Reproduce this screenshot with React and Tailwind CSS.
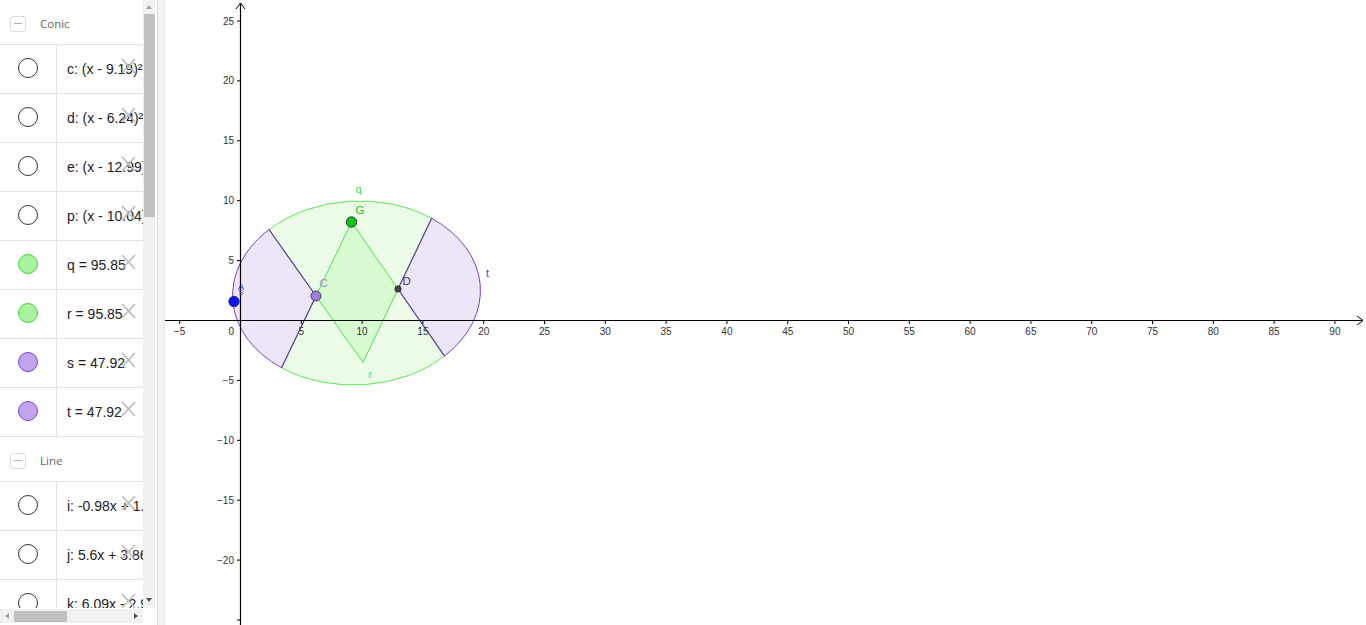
import React from "react";

const conicRows = [
  { text: "c: (x - 9.19)² + (y - 2.37)² = 35.26", dot: "empty" },
  { text: "d: (x - 6.24)² + (y - 8.47)² = 35.26", dot: "empty" },
  { text: "e: (x - 12.99)² + (y - 8.47)² = 35.26", dot: "empty" },
  { text: "p: (x - 10.04)² + (y - 2.37)² = 35.26", dot: "empty" },
  { text: "q = 95.85", dot: "green" },
  { text: "r = 95.85", dot: "green" },
  { text: "s = 47.92", dot: "purple" },
  { text: "t = 47.92", dot: "purple" },
];

const lineRows = [
  { text: "i: -0.98x + 1.23y = 36.81", dot: "empty" },
  { text: "j: 5.6x + 3.86y = 43.47", dot: "empty" },
  { text: "k: 6.09x - 2.97y = 73.51", dot: "empty" },
];

const dotClass = {
  empty: "bg-white border-[#333]",
  green: "bg-[#a8f2a0] border-[#3cd63c]",
  purple: "bg-[#c2a3ef] border-[#7a44d4]",
};

function Header({ title }) {
  return (
    <div className="h-[45px] flex items-center pt-[3px] border-b border-[#e2e2e2]">
      <span className="ml-[10px] w-[16px] h-[16px] rounded-[3px] border border-[#dcdcdc] flex items-center justify-center">
        <span className="w-[8px] h-px bg-[#b0b0b0]" />
      </span>
      <span className="ml-[14px] text-[11.5px] text-[#666]" style={{ fontFamily: "'Open Sans', sans-serif" }}>
        {title}
      </span>
    </div>
  );
}

function Row({ text, dot }) {
  return (
    <div className="relative h-[49px] flex border-b border-[#e2e2e2]">
      <div className="w-[57px] shrink-0 flex items-center justify-center pb-[3px] border-r border-[#e2e2e2]">
        <span className={`w-[20px] h-[20px] rounded-full border ${dotClass[dot]}`} />
      </div>
      <div className="flex items-center pl-[10px] whitespace-nowrap text-[14px] text-[#222]">
        {text}
      </div>
      <svg className="absolute left-[120px] top-[13px]" width="17" height="16" viewBox="0 0 17 16">
        <path d="M2 1 L15 15 M15 1 L2 15" stroke="#bdbdbd" strokeWidth="1.8" fill="none" />
      </svg>
    </div>
  );
}

// ellipse geometry in page pixels
const cx = 356.5, cy = 293, rx = 124, ry = 92, deg = -2.5;
const phi = (deg * Math.PI) / 180;

function hit(p, q) {
  const dx = q[0] - p[0], dy = q[1] - p[1];
  const c = Math.cos(phi), s = Math.sin(phi);
  const wx = q[0] - cx, wy = q[1] - cy;
  const lx = wx * c + wy * s, ly = -wx * s + wy * c;
  const ldx = dx * c + dy * s, ldy = -dx * s + dy * c;
  const A = (ldx * ldx) / (rx * rx) + (ldy * ldy) / (ry * ry);
  const B = 2 * ((lx * ldx) / (rx * rx) + (ly * ldy) / (ry * ry));
  const C = (lx * lx) / (rx * rx) + (ly * ly) / (ry * ry) - 1;
  const t = (-B + Math.sqrt(B * B - 4 * A * C)) / (2 * A);
  return [q[0] + dx * t, q[1] + dy * t];
}

const G = [351.5, 222];
const Cp = [316, 296];
const D = [398, 289];
const Bv = [363, 362.5];
const P1 = hit(Bv, Cp);
const P2 = hit(G, Cp);
const P3 = hit(Bv, D);
const P4 = hit(G, D);

const pt = (p) => `${p[0].toFixed(2)} ${p[1].toFixed(2)}`;
const arc = (p, sweep) => `A ${rx} ${ry} ${deg} 0 ${sweep} ${pt(p)}`;

const X0 = 240.5, Y0 = 320.5, SX = 12.16, SY = 11.98;
const lbl = (n) => (n < 0 ? `\u2212${-n}` : `${n}`);

function Graph() {
  const xs = [];
  for (let k = -5; k <= 90; k += 5) if (k !== 0) xs.push(k);
  const ys = [];
  for (let k = -25; k <= 25; k += 5) if (k !== 0) ys.push(k);
  const font = { fontFamily: "'Liberation Sans', Arial, sans-serif" };

  return (
    <svg width="1201" height="625" viewBox="165 0 1201 625" className="block">
      {/* ellipse filled regions */}
      <ellipse cx={cx} cy={cy} rx={rx} ry={ry} transform={`rotate(${deg} ${cx} ${cy})`} fill="#ebfbe8" />
      <path d={`M ${pt(G)} L ${pt(D)} L ${pt(Bv)} L ${pt(Cp)} Z`} fill="#d8fbd1" stroke="#55dd4c" strokeWidth="1" />
      <path d={`M ${pt(Cp)} L ${pt(P1)} ${arc(P2, 0)} Z`} fill="#ede5f8" />
      <path d={`M ${pt(D)} L ${pt(P3)} ${arc(P4, 1)} Z`} fill="#ede5f8" />

      {/* ellipse outline */}
      <path d={`M ${pt(P1)} ${arc(P3, 1)}`} fill="none" stroke="#5fe456" strokeWidth="1" />
      <path d={`M ${pt(P4)} ${arc(P2, 1)}`} fill="none" stroke="#5fe456" strokeWidth="1" />
      <path d={`M ${pt(P1)} ${arc(P2, 0)}`} fill="none" stroke="#7a42d0" strokeWidth="1" />
      <path d={`M ${pt(P3)} ${arc(P4, 1)}`} fill="none" stroke="#7a42d0" strokeWidth="1" />

      {/* sector borders */}
      <path d={`M ${pt(P1)} L ${pt(Cp)} L ${pt(P2)}`} fill="none" stroke="#4f3d92" strokeWidth="1.2" />
      <path d={`M ${pt(P3)} L ${pt(D)} L ${pt(P4)}`} fill="none" stroke="#4f3d92" strokeWidth="1.2" />

      {/* axes */}
      <line x1="165" y1={Y0} x2="1363" y2={Y0} stroke="#000" strokeWidth="1.2" />
      <path d={`M 1357 ${Y0 - 4.5} L 1363 ${Y0} L 1357 ${Y0 + 4.5}`} fill="none" stroke="#000" strokeWidth="1" />
      <line x1={X0} y1="625" x2={X0} y2="3" stroke="#000" strokeWidth="1.2" />
      <path d={`M ${X0 - 4.5} 9 L ${X0} 3 L ${X0 + 4.5} 9`} fill="none" stroke="#000" strokeWidth="1" />

      {xs.map((k) => {
        const x = X0 + k * SX;
        return (
          <g key={`x${k}`}>
            <line x1={x} y1={Y0} x2={x} y2={Y0 + 3.5} stroke="#000" strokeWidth="1" />
            <text x={x} y="334.5" textAnchor="middle" fontSize="10" fill="#333" style={font}>
              {lbl(k)}
            </text>
          </g>
        );
      })}
      <text x="234" y="334.5" textAnchor="end" fontSize="10" fill="#333" style={font}>
        0
      </text>
      {ys.map((k) => {
        const y = Y0 - k * SY;
        return (
          <g key={`y${k}`}>
            <line x1={X0 - 3.5} y1={y} x2={X0} y2={y} stroke="#000" strokeWidth="1" />
            {k > -25 && (
              <text x="234" y={y + 3.5} textAnchor="end" fontSize="10" fill="#333" style={font}>
                {lbl(k)}
              </text>
            )}
          </g>
        );
      })}

      {/* labels */}
      <text x="355.5" y="193" fontSize="11" fill="#44dd44" style={font}>q</text>
      <text x="368.5" y="377.5" fontSize="11" fill="#44dd44" style={font}>r</text>
      <text x="486" y="277" fontSize="11" fill="#6a36c8" style={font}>t</text>
      <text x="238" y="289.5" fontSize="9" fill="#0000ff" style={font}>A</text>
      <text x="238.5" y="295" fontSize="9" fill="#7a42d0" style={font}>s</text>
      <text x="319.5" y="286.5" fontSize="11.5" fill="#a384e2" style={font}>C</text>
      <text x="355.5" y="213.5" fontSize="11.5" fill="#1fbf1f" style={font}>G</text>
      <text x="402.5" y="284.5" fontSize="11.5" fill="#444" style={font}>D</text>

      {/* points */}
      <circle cx="234" cy="301.5" r="5.2" fill="#0a14f5" stroke="#1a1a66" strokeWidth="0.8" />
      <circle cx={Cp[0]} cy={Cp[1]} r="5" fill="#9f80e0" stroke="#3a3a3a" strokeWidth="0.9" />
      <circle cx={G[0]} cy={G[1]} r="5.2" fill="#12c412" stroke="#2a2a2a" strokeWidth="0.9" />
      <circle cx={D[0]} cy={D[1]} r="3.2" fill="#444" stroke="#222" strokeWidth="0.6" />
    </svg>
  );
}

export default function App() {
  return (
    <div className="w-[1366px] h-[625px] flex overflow-hidden bg-white" style={{ fontFamily: "'Liberation Sans', Arial, sans-serif" }}>
      {/* algebra view */}
      <div className="w-[157px] shrink-0 flex flex-col">
        <div className="h-[608px] flex">
          <div className="w-[143px] shrink-0 overflow-hidden">
            <Header title="Conic" />
            {conicRows.map((r) => (
              <Row key={r.text} {...r} />
            ))}
            <Header title="Line" />
            {lineRows.map((r) => (
              <Row key={r.text} {...r} />
            ))}
          </div>
          <div className="w-[12px] shrink-0 bg-[#f1f1f1] flex flex-col items-center">
            <div className="h-[14px] flex items-center justify-center">
              <span className="w-0 h-0 border-l-[3.5px] border-r-[3.5px] border-b-[4px] border-l-transparent border-r-transparent border-b-[#a3a3a3]" />
            </div>
            <div className="w-[11px] ml-[1px] h-[203px] bg-[#c1c1c1]" />
            <div className="flex-1" />
            <div className="h-[14px] flex items-center justify-center mb-[1px]">
              <span className="w-0 h-0 border-l-[3.5px] border-r-[3.5px] border-t-[4px] border-l-transparent border-r-transparent border-t-[#505050]" />
            </div>
          </div>
          <div className="w-[2px] shrink-0 bg-white" />
        </div>
        <div className="h-[17px] flex">
          <div className="w-[143px] h-[14px] mt-[1px] bg-[#f1f1f1] flex items-center">
            <div className="w-[14px] flex items-center justify-center">
              <span className="w-0 h-0 border-t-[3.5px] border-b-[3.5px] border-r-[4px] border-t-transparent border-b-transparent border-r-[#a3a3a3]" />
            </div>
            <div className="w-[53px] h-[11px] bg-[#c1c1c1]" />
            <div className="flex-1" />
            <div className="w-[14px] flex items-center justify-center">
              <span className="w-0 h-0 border-t-[3.5px] border-b-[3.5px] border-l-[4px] border-t-transparent border-b-transparent border-l-[#505050]" />
            </div>
          </div>
        </div>
      </div>

      {/* splitter */}
      <div className="w-[8px] shrink-0 bg-[#f3f3f3] border-l border-[#d9d9d9] border-r border-r-[#e8e8e8]" />

      {/* graphics view */}
      <div className="flex-1 overflow-hidden">
        <Graph />
      </div>
    </div>
  );
}
